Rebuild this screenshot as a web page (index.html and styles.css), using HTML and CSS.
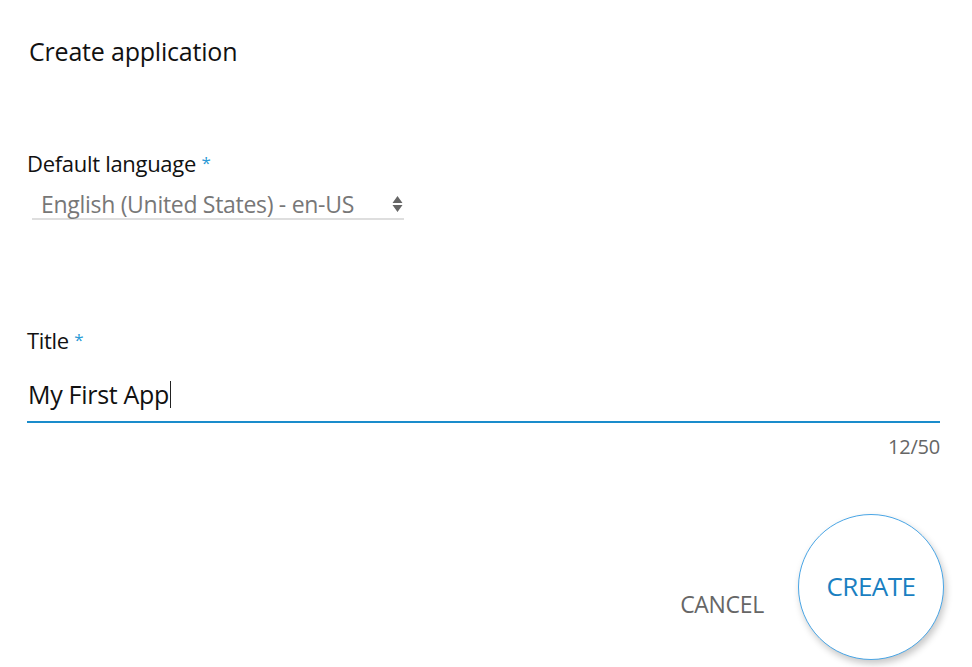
FILE: index.html
```html
<!DOCTYPE html>
<html>
<head>
<meta charset="utf-8">
<link rel="stylesheet" href="styles.css">
</head>
<body>
<div class="dialog">
  <h1 class="heading">Create application</h1>
  <div class="field field-lang">
    <label class="label">Default language <span class="req">*</span></label>
    <div class="select">
      <span class="select-value">English (United States) - en-US</span>
      <svg class="arrows" width="11" height="20" viewBox="0 0 11 20"><path d="M5.5 2 L10.5 9 H0.5 Z M5.5 18 L10.5 11 H0.5 Z" fill="#666"/></svg>
    </div>
  </div>
  <div class="field field-title">
    <label class="label">Title <span class="req">*</span></label>
    <div class="input"><span class="input-value">My First App</span><span class="caret"></span></div>
    <div class="counter">12/50</div>
  </div>
  <div class="actions">
    <button class="btn-cancel">CANCEL</button>
    <button class="btn-create">CREATE</button>
  </div>
</div>
</body>
</html>
```
FILE: styles.css
```css
* { box-sizing: border-box; }
html, body { margin: 0; padding: 0; background: #fff; }
body { font-family: "Open Sans", "Noto Sans", sans-serif; color: #111; }
.dialog { width: 972px; height: 667px; padding: 36px 32px 0 27px; display: flex; flex-direction: column; overflow: hidden; }
.heading { margin: 0 0 0 2px; font-size: 25px; font-weight: 400; line-height: 30px; letter-spacing: -0.2px; }
.field { display: flex; flex-direction: column; }
.field-lang { margin-top: 84px; width: 377px; }
.label { font-size: 22px; line-height: 26px; letter-spacing: -0.3px; }
.req { color: #2a9ad6; font-size: 17px; vertical-align: 3px; }
.select { margin-left: 5px; height: 44px; border-bottom: 2px solid #dedede; display: flex; align-items: center; justify-content: space-between; padding: 14px 0 0 9px; }
.select-value { font-size: 23px; line-height: 28px; color: #777; letter-spacing: -0.3px; }
.arrows { margin-right: 1px; }
.field-title { margin-top: 107px; }
.input { height: 70px; border-bottom: 2px solid #1a8ccb; display: flex; align-items: center; padding: 14px 0 0 1px; }
.input-value { font-size: 25px; line-height: 30px; color: #111; letter-spacing: -0.3px; }
.caret { width: 1px; height: 27px; background: #222; margin-left: 1px; }
.counter { align-self: flex-end; margin-top: 12px; font-size: 20px; line-height: 24px; color: #666; letter-spacing: -0.2px; }
.actions { margin-top: 55px; display: flex; align-items: flex-start; justify-content: flex-end; gap: 34px; }
.btn-cancel { background: none; border: none; padding: 0; margin-top: 75px; font-family: inherit; font-size: 23px; line-height: 30px; color: #666; letter-spacing: -0.3px; }
.btn-create { width: 146px; height: 146px; border-radius: 50%; border: 1.5px solid #4aa6e6; background: #fff; box-shadow: 2px 4px 7px rgba(0,0,0,0.22); font-family: inherit; font-size: 26px; color: #1a7fc1; letter-spacing: -0.5px; padding: 0 0 2px 0; margin-right: -4px; }
```
